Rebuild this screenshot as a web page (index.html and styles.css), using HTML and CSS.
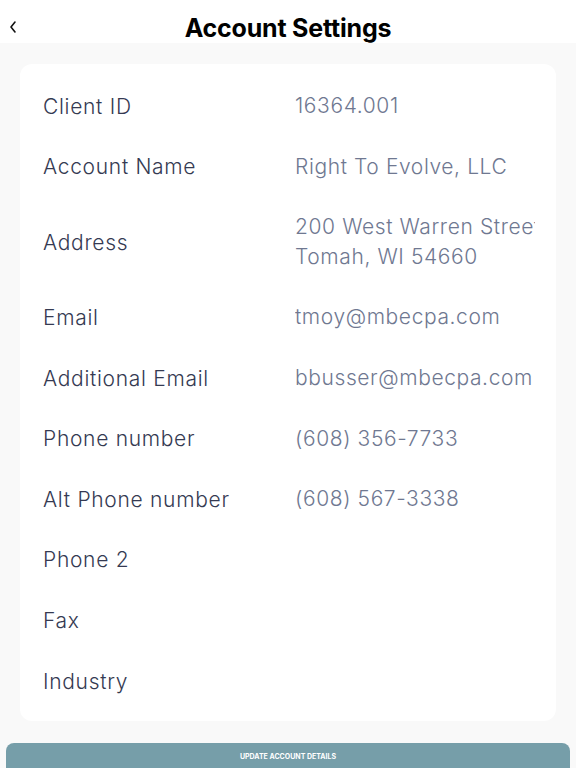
FILE: index.html
```html
<!DOCTYPE html>
<html>
<head>
<meta charset="utf-8">
<link rel="stylesheet" href="styles.css">
</head>
<body>
<div class="page">
  <header class="topbar">
    <span class="back"><svg width="10" height="14" viewBox="0 0 10 14"><path d="M7 2 L3 7 L7 12" fill="none" stroke="#111" stroke-width="1.6" stroke-linecap="round" stroke-linejoin="round"/></svg></span>
    <h1 class="title">Account Settings</h1>
  </header>
  <main class="content">
    <section class="card">
      <div class="row"><div class="label">Client ID</div><div class="value">16364.001</div></div>
      <div class="row"><div class="label">Account Name</div><div class="value">Right To Evolve, LLC</div></div>
      <div class="row tall"><div class="label">Address</div><div class="value">200 West Warren Street<br>Tomah, WI 54660</div></div>
      <div class="row"><div class="label">Email</div><div class="value">tmoy@mbecpa.com</div></div>
      <div class="row"><div class="label">Additional Email</div><div class="value">bbusser@mbecpa.com</div></div>
      <div class="row"><div class="label">Phone number</div><div class="value">(608) 356-7733</div></div>
      <div class="row"><div class="label">Alt Phone number</div><div class="value">(608) 567-3338</div></div>
      <div class="row"><div class="label">Phone 2</div><div class="value"></div></div>
      <div class="row"><div class="label">Fax</div><div class="value"></div></div>
      <div class="row"><div class="label">Industry</div><div class="value"></div></div>
    </section>
    <button class="update">UPDATE ACCOUNT DETAILS</button>
  </main>
</div>
</body>
</html>
```
FILE: styles.css
```css
* { box-sizing: border-box; }
html, body { margin: 0; padding: 0; }
body {
  width: 576px;
  height: 768px;
  overflow: hidden;
  background: #f9f9f9;
  font-family: "Inter", "Noto Sans", sans-serif;
}
.page { display: flex; flex-direction: column; }
.topbar {
  height: 43px;
  background: #ffffff;
  display: flex;
  align-items: center;
  justify-content: center;
  position: relative;
}
.back {
  position: absolute;
  left: 8px;
  top: 20px;
  display: flex;
}
.title {
  margin: 0;
  font-size: 25px;
  font-weight: 700;
  color: #000;
  letter-spacing: -0.2px;
  line-height: 1;
  padding-top: 14px;
}
.content {
  padding: 21px 6px 0 6px;
  display: flex;
  flex-direction: column;
  gap: 22px;
}
.card {
  margin: 0 14px;
  background: #ffffff;
  border-radius: 12px;
  padding: 12px 0 10px 0;
  display: flex;
  flex-direction: column;
}
.row {
  display: grid;
  grid-template-columns: 252px 240px;
  align-items: center;
  height: 60.6px;
  padding-left: 23px;
  font-size: 21px;
  font-weight: 350;
  letter-spacing: 0.7px;
}
.row.tall { height: 90px; }
.label { color: #353a52; }
.value {
  color: #6f7891;
  white-space: nowrap;
  overflow: hidden;
  line-height: 30px;
  letter-spacing: 0.6px;
}
.update {
  height: 32px;
  border: none;
  border-radius: 8px;
  background: #769ea9;
  color: #fff;
  font-family: "Inter", sans-serif;
  font-size: 7px;
  font-weight: 700;
  padding: 0 0 6px 0;
  width: 100%;
}
```
